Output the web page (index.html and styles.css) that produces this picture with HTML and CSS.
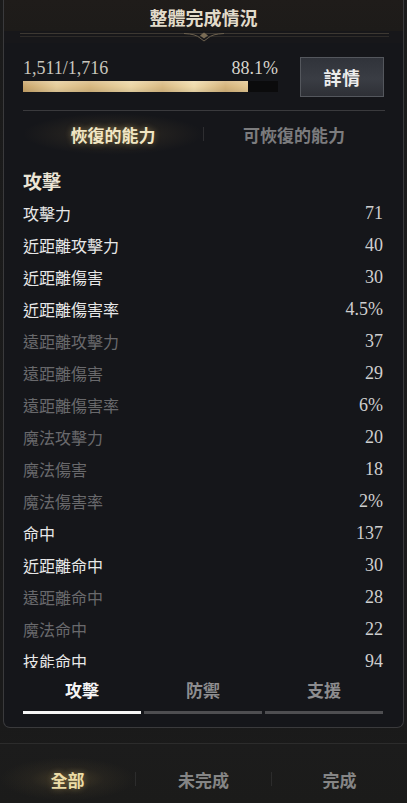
FILE: index.html
```html
<!DOCTYPE html>
<html lang="zh-Hant">
<head>
<meta charset="utf-8">
<title>整體完成情況</title>
<link rel="stylesheet" href="styles.css">
</head>
<body>
<div class="screen">
  <div class="panel">
    <div class="header">整體完成情況</div>
    <svg class="ornament" width="401" height="12" viewBox="0 0 401 12">
      <line x1="16" y1="2.5" x2="385" y2="2.5" stroke="#3d3832" stroke-width="1.2"/>
      <line x1="16" y1="5.5" x2="385" y2="5.5" stroke="#2e2b28" stroke-width="1"/>
      <path d="M180 2.5 Q192 3 196 7 L200 10 L204 7 Q208 3 220 2.5" fill="none" stroke="#6b604e" stroke-width="1"/>
      <path d="M196 4.5 L200 1.5 L204 4.5 L200 7.5 Z" fill="#7a6c55"/>
    </svg>
    <div class="progress">
      <div class="progress-main">
        <div class="progress-text">
          <span>1,511/1,716</span>
          <span>88.1%</span>
        </div>
        <div class="bar"><div class="bar-fill" style="width:88.1%"></div></div>
      </div>
      <div class="detail-btn">詳情</div>
    </div>
    <div class="sep"></div>
    <div class="subtabs">
      <div class="subtab active">恢復的能力</div>
      <div class="subtab-div"></div>
      <div class="subtab">可恢復的能力</div>
    </div>
    <div class="list">
      <div class="section">攻擊</div>
      <div class="row"><span>攻擊力</span><span class="val">71</span></div>
      <div class="row"><span>近距離攻擊力</span><span class="val">40</span></div>
      <div class="row"><span>近距離傷害</span><span class="val">30</span></div>
      <div class="row"><span>近距離傷害率</span><span class="val">4.5%</span></div>
      <div class="row dim"><span>遠距離攻擊力</span><span class="val">37</span></div>
      <div class="row dim"><span>遠距離傷害</span><span class="val">29</span></div>
      <div class="row dim"><span>遠距離傷害率</span><span class="val">6%</span></div>
      <div class="row dim"><span>魔法攻擊力</span><span class="val">20</span></div>
      <div class="row dim"><span>魔法傷害</span><span class="val">18</span></div>
      <div class="row dim"><span>魔法傷害率</span><span class="val">2%</span></div>
      <div class="row"><span>命中</span><span class="val">137</span></div>
      <div class="row"><span>近距離命中</span><span class="val">30</span></div>
      <div class="row dim"><span>遠距離命中</span><span class="val">28</span></div>
      <div class="row dim"><span>魔法命中</span><span class="val">22</span></div>
      <div class="row"><span>技能命中</span><span class="val">94</span></div>
    </div>
    <div class="cattabs">
      <div class="cattab active"><div class="cattab-label">攻擊</div><div class="cattab-line"></div></div>
      <div class="cattab"><div class="cattab-label">防禦</div><div class="cattab-line"></div></div>
      <div class="cattab"><div class="cattab-label">支援</div><div class="cattab-line"></div></div>
    </div>
  </div>
  <div class="nav">
    <div class="nav-item active">全部</div>
    <div class="nav-div"></div>
    <div class="nav-item">未完成</div>
    <div class="nav-div"></div>
    <div class="nav-item">完成</div>
  </div>
</div>
</body>
</html>
```

FILE: styles.css
```css
* { box-sizing: border-box; }
html, body {
  margin: 0;
  padding: 0;
  background: #1a1a1a;
}
body {
  width: 407px;
  height: 803px;
  overflow: hidden;
  font-family: "Noto Sans CJK TC", "Noto Sans", sans-serif;
}
.screen {
  width: 407px;
  height: 803px;
  display: flex;
  flex-direction: column;
  background: linear-gradient(180deg, #1b1b1b 0%, #1a1a1a 90%, #1c1c1c 100%);
}
.panel {
  margin: 0 3px;
  height: 728px;
  display: flex;
  flex-direction: column;
  background: #15161a;
  border: 1px solid #3a3a3c;
  border-top: none;
  border-radius: 0 0 7px 7px;
  overflow: hidden;
}
.header {
  height: 31px;
  flex: none;
  display: flex;
  align-items: center;
  justify-content: center;
  padding-top: 3px;
  font-size: 18px;
  font-weight: 700;
  color: #e2dbca;
  background: linear-gradient(180deg, #1f1c1a 0%, #1d1b19 100%);
}
.ornament {
  display: block;
  flex: none;
  background: #17171a;
}
.progress {
  flex: none;
  display: flex;
  align-items: flex-start;
  gap: 22px;
  padding: 14px 19px 13px 19px;
}
.progress-main {
  width: 255px;
  height: 40px;
}
.progress-text {
  display: flex;
  justify-content: space-between;
  font-family: "Liberation Serif", "DejaVu Serif", serif;
  font-size: 18px;
  line-height: 22px;
  color: #c9c6be;
}
.progress-text span:last-child {
  color: #d8d5cd;
}
.bar {
  margin-top: 2px;
  height: 11px;
  background: #0b0b0c;
}
.bar-fill {
  height: 100%;
  background:
    linear-gradient(180deg, rgba(255,255,255,0.18) 0%, rgba(255,255,255,0) 50%, rgba(0,0,0,0.08) 100%),
    linear-gradient(90deg, #c9a56a 0%, #e6cd9b 15%, #d7b880 30%, #ecd6a5 48%, #d9ba83 62%, #f0dcac 76%, #d5b47c 90%, #e4c892 100%);
}
.detail-btn {
  width: 84px;
  height: 40px;
  display: flex;
  align-items: center;
  justify-content: center;
  font-size: 18px;
  font-weight: 700;
  color: #ececec;
  background: linear-gradient(180deg, #30333a 0%, #3a3d44 55%, #2e3036 100%);
  border: 1px solid #54575d;
  letter-spacing: 0.5px;
}
.sep {
  flex: none;
  height: 1px;
  margin: 0 18px 0 19px;
  background: #3a3a3d;
}
.subtabs {
  flex: none;
  height: 46px;
  display: flex;
  align-items: center;
  padding: 0 19px;
}
.subtab {
  flex: 1;
  height: 100%;
  display: flex;
  align-items: center;
  justify-content: center;
  font-size: 17px;
  font-weight: 700;
  color: #7c7c7e;
}
.subtab.active {
  color: #f1e6c4;
  text-shadow: 0 0 6px rgba(214, 183, 110, 0.45);
  background: radial-gradient(ellipse 50% 45% at 50% 50%, rgba(150, 125, 70, 0.32) 0%, rgba(120, 100, 60, 0.12) 55%, rgba(0,0,0,0) 100%);
}
.subtab-div {
  width: 1px;
  height: 14px;
  background: #2e2e31;
  flex: none;
}
.list {
  flex: none;
  height: 511px;
  overflow: hidden;
  padding: 0 20px 0 19px;
}
.section {
  height: 40px;
  padding-top: 6px;
  display: flex;
  align-items: center;
  font-size: 19px;
  font-weight: 700;
  color: #ebe5d6;
}
.row {
  height: 32px;
  display: flex;
  align-items: center;
  justify-content: space-between;
  font-size: 16px;
  color: #e8e8e8;
}
.row.dim {
  color: #69696c;
}
.val {
  font-family: "Liberation Serif", "DejaVu Serif", serif;
  font-size: 18px;
  color: #cfcfcf;
}
.cattabs {
  flex: none;
  display: flex;
  gap: 3px;
  padding: 0 20px 13px 19px;
}
.cattab {
  flex: 1;
}
.cattab-label {
  height: 42px;
  display: flex;
  align-items: center;
  justify-content: center;
  font-size: 17px;
  font-weight: 700;
  color: #8d8d8f;
}
.cattab-line {
  margin-top: 1px;
  height: 3px;
  background: #4e4e51;
}
.cattab.active .cattab-label {
  color: #f4f4f4;
}
.cattab.active .cattab-line {
  background: #f5f5f5;
}
.nav {
  margin-top: 15px;
  flex: 1;
  display: flex;
  align-items: flex-start;
  padding-top: 11px;
  border-top: 1px solid #2c2c2c;
  background: linear-gradient(180deg, #1c1c1c 0%, #1b1b1a 100%);
}
.nav-item {
  flex: 1;
  height: 48px;
  display: flex;
  align-items: center;
  justify-content: center;
  font-size: 17px;
  font-weight: 700;
  color: #858585;
}
.nav-item.active {
  color: #ecdca6;
  text-shadow: 0 0 6px rgba(214, 183, 110, 0.45);
  background: radial-gradient(ellipse 50% 45% at 50% 50%, rgba(150, 125, 70, 0.3) 0%, rgba(120, 100, 60, 0.1) 55%, rgba(0,0,0,0) 100%);
}
.nav-div {
  flex: none;
  width: 1px;
  height: 14px;
  margin-top: 17px;
  background: #2c2c2c;
}
```
